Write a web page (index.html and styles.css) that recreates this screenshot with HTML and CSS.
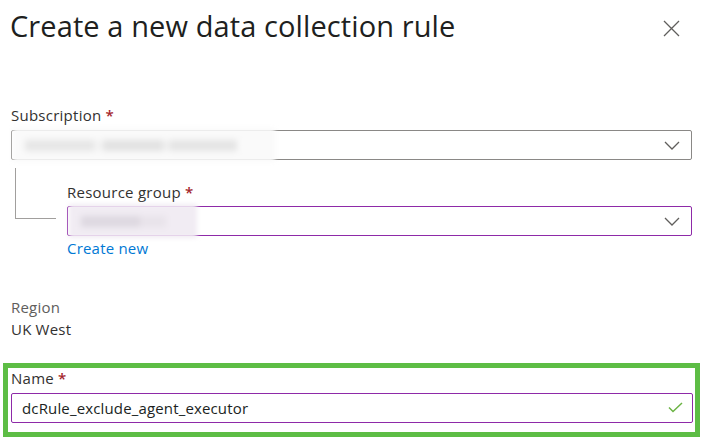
FILE: index.html
```html
<!DOCTYPE html>
<html lang="en">
<head>
<meta charset="utf-8">
<title>Create a new data collection rule</title>
<link rel="stylesheet" href="styles.css">
</head>
<body>
<div class="panel">
  <header class="header">
    <h1 class="title">Create a new data collection rule</h1>
    <button class="close" aria-label="Close">
      <svg width="17" height="17" viewBox="0 0 17 17"><path d="M1 1 L16 16 M16 1 L1 16" stroke="#605e5c" stroke-width="1.3" fill="none"/></svg>
    </button>
  </header>

  <div class="field sub-field">
    <label class="label">Subscription <span class="req">*</span></label>
    <div class="select">
      <div class="blur blur-gray"><span class="blur-text"></span></div>
      <svg class="chev" width="16" height="9" viewBox="0 0 16 9"><path d="M1 1 L8 8 L15 1" stroke="#605e5c" stroke-width="1.3" fill="none"/></svg>
    </div>
  </div>

  <div class="nested">
    <div class="tree"></div>
    <div class="field nested-field">
      <label class="label">Resource group <span class="req">*</span></label>
      <div class="select focus">
        <div class="blur blur-purple"><span class="blur-text short"></span></div>
        <svg class="chev" width="16" height="9" viewBox="0 0 16 9"><path d="M1 1 L8 8 L15 1" stroke="#605e5c" stroke-width="1.3" fill="none"/></svg>
      </div>
      <a class="link" href="#">Create new</a>
    </div>
  </div>

  <div class="region">
    <div class="region-label">Region</div>
    <div class="region-value">UK West</div>
  </div>

  <div class="highlight">
    <div class="field">
      <label class="label">Name <span class="req">*</span></label>
      <div class="select focus">
        <span class="value">dcRule_exclude_agent_executor</span>
        <svg class="check" width="15" height="11" viewBox="0 0 15 11"><path d="M1 5.5 L5 9.5 L14 1" stroke="#6bb344" stroke-width="1.5" fill="none"/></svg>
      </div>
    </div>
  </div>
</div>
</body>
</html>
```

FILE: styles.css
```css
* { box-sizing: border-box; }
html, body { margin: 0; padding: 0; background: #fff; }
body {
  font-family: "Open Sans", "Noto Sans", "Liberation Sans", sans-serif;
  color: #323130;
  width: 708px;
  height: 440px;
  overflow: hidden;
}
.header {
  display: flex;
  justify-content: space-between;
  align-items: flex-start;
  padding: 4px 28px 0 10px;
  height: 105px;
}
.title {
  margin: 0;
  font-size: 29px;
  font-weight: 400;
  line-height: 44px;
  color: #201f1e;
  letter-spacing: 0.1px;
}
.close {
  border: 0;
  background: none;
  padding: 0;
  margin-top: 16px;
  width: 17px;
  height: 17px;
  display: flex;
}
.field { display: flex; flex-direction: column; }
.sub-field { padding: 0 16px 0 11px; }
.label {
  font-size: 15px;
  line-height: 20px;
  letter-spacing: 0.25px;
  color: #323130;
  margin-bottom: 5px;
}
.req { color: #a4262c; font-weight: 600; }
.select {
  position: relative;
  height: 30px;
  border: 1px solid #8a8886;
  border-radius: 2px;
  display: flex;
  align-items: center;
  padding: 0 10px;
}
.select.focus { border-color: #8e2aa8; }
.chev { position: absolute; right: 11px; top: 10px; }
.check { position: absolute; right: 9px; top: 8px; }
.value { font-size: 15px; letter-spacing: 0.15px; color: #201f1e; }
.blur {
  position: absolute;
  top: -3px;
  bottom: -3px;
  filter: blur(2px);
  display: flex;
  align-items: center;
}
.blur-gray { left: 1px; width: 262px; background: #fafafa; }
.blur-purple { left: 1px; width: 128px; background: #f1ecf3; }
.blur-text {
  display: block;
  height: 11px;
  margin-left: 12px;
  width: 230px;
  background: linear-gradient(90deg, #e6e6e6 0 30%, #f3f3f3 30% 34%, #e2e2e2 34% 60%, #f0f0f0 60% 63%, #e4e4e4 63% 92%, #fafafa 92%);
  filter: blur(2px);
}
.blur-text.short {
  width: 85px;
  background: linear-gradient(90deg, #ddd8e0 0 70%, #e8e3ea 70%);
}
.nested {
  display: flex;
  padding: 0 16px 0 15px;
}
.tree {
  width: 41px;
  height: 51px;
  margin-top: 8px;
  margin-right: 11px;
  border-left: 1px solid #a19f9d;
  border-bottom: 1px solid #a19f9d;
  flex: none;
}
.nested-field { flex: 1; padding-top: 22px; }
.nested-field .label { margin-bottom: 4px; }
.link {
  font-size: 15px;
  line-height: 20px;
  letter-spacing: 0.2px;
  color: #0078d4;
  text-decoration: none;
  margin-top: 2px;
}
.region {
  padding: 0 0 0 11px;
  margin-top: 38px;
  font-size: 15px;
  line-height: 22px;
  letter-spacing: 0.2px;
}
.region-label { color: #605e5c; }
.region-value { color: #323130; }
.highlight {
  margin: 23px 0 0 3px;
  width: 697px;
  border: 5px solid #5dbd45;
  padding: 0 2px 9px 3px;
}
.highlight .label { margin-bottom: 5px; }
```
